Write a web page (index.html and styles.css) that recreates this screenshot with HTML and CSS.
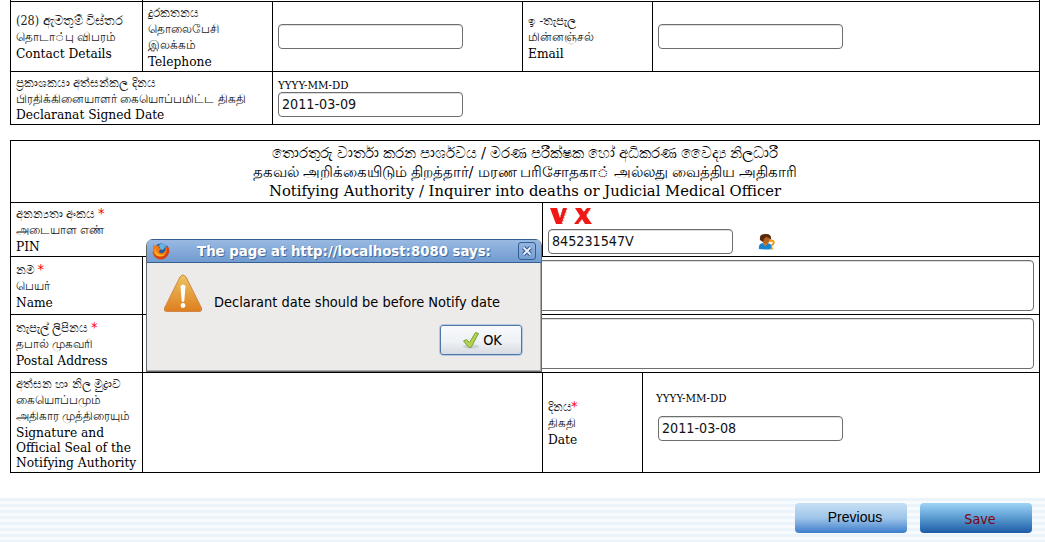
FILE: index.html
```html
<!DOCTYPE html>
<html lang="en">
<head>
<meta charset="utf-8">
<title>Death Declaration</title>
<link rel="stylesheet" href="styles.css">
</head>
<body>
<main class="page">
  <section class="table contact">
    <div class="cell stub"></div><div class="cell stub stub-rest"></div>
    <div class="cell label mid"><p class="si contact-si">(28) ඇමතුම් විස්තර</p><p class="ta">தொடா◌்பு விபரம்</p><p>Contact Details</p></div>
    <div class="cell label mid"><p class="si">දුරකතනය</p><p class="ta">தொலைபேசி</p><p class="ta">இலக்கம்</p><p>Telephone</p></div>
    <div class="cell field"><input class="input" type="text" aria-label="Telephone"></div>
    <div class="cell label mid"><p class="si">ඉ -තැපැල</p><p class="ta">மின்னஞ்சல்</p><p>Email</p></div>
    <div class="cell field"><input class="input" type="text" aria-label="Email"></div>
    <div class="cell label signed span2"><p class="si">ප්‍රකාශකයා අත්සන්කල දිනය</p><p class="ta">பிரதிக்கினையாளர் கையொப்பமிட்ட திகதி</p><p>Declaranat Signed Date</p></div>
    <div class="cell field span3"><span class="hint">YYYY-MM-DD</span><input class="input" type="text" value="2011-03-09" aria-label="Signed date"></div>
  </section>

  <section class="table authority">
    <header class="cell heading"><p class="si">තොරතුරු වාර්තා කරන පාර්ශවය / මරණ පරීක්ෂක හෝ අධිකරණ වෛද්‍ය නිලධාරී</p><p class="ta">தகவல் அறிக்கையிடும் திறத்தார்/ மரண பரிசோதகா◌் அல்லது வைத்திய அதிகாரி</p><p>Notifying Authority / Inquirer into deaths or Judicial Medical Officer</p></header>
    <div class="cell label span2"><p class="si">අනන්‍යතා අංකය <b class="req">*</b></p><p class="ta">அடையாள எண்</p><p>PIN</p></div>
    <div class="cell pin span2">
      <div class="marks">
        <svg width="19" height="17" viewBox="0 0 19 17"><path d="M0 0h7l3 10L13 0h4l-5.500 16H6z" fill="#f31814"/><path d="M10 11l3-10M12 16l5-15" stroke="#7c1712" stroke-width=".7" stroke-dasharray="1 2"/></svg>
        <svg width="18" height="17" viewBox="0 0 18 17"><path d="M1 0h6l3 4 3-4h4l-5 7.500 6 8.500h-7l-3-5-4 5H0l6-8z" fill="#f31814"/><path d="M10 4l3-4M12 8l5-7M4 16l4-5" stroke="#7c1712" stroke-width=".7" stroke-dasharray="1 2"/></svg>
      </div>
      <div class="pin-row"><input class="input" type="text" value="845231547V" aria-label="PIN">
        <svg width="18" height="18" viewBox="0 0 18 18"><path d="M1 16q-1-6 5-6h3q5 0 5 6-7 1-13 0" fill="#1685ce"/><path d="M5 8h5l-1 4-2 1-2-2z" fill="#c8772b"/><ellipse cx="8" cy="6" rx="4" ry="4.500" fill="#b56422"/><path d="M2 7Q1 1 7 1q7-1 6 6l-2-2-3-1-2 2-1 3z" fill="#5b2a0c"/><path d="M12 9q1-2 3-1 2 2-1 4v1" fill="none" stroke="#ef9b17" stroke-width="2"/><circle cx="14" cy="15.500" r="1.300" fill="#f5a51a"/></svg>
      </div>
    </div>
    <div class="cell label person"><p class="si">නම <b class="req">*</b></p><p class="ta">பெயர்</p><p>Name</p></div>
    <div class="cell area span3"><textarea class="input" aria-label="Name"></textarea></div>
    <div class="cell label person"><p class="si">තැපැල් ලිපිනය <b class="req">*</b></p><p class="ta">தபால் முகவரி</p><p>Postal Address</p></div>
    <div class="cell area span3"><textarea class="input" aria-label="Postal address"></textarea></div>
    <div class="cell label seal"><p class="si">අත්සන හා නිල මුද්‍රාව</p><p class="ta">கையொப்பமும்</p><p class="ta">அதிகார முத்திரையும்</p><p>Signature and</p><p>Official Seal of the</p><p>Notifying Authority</p></div>
    <div class="cell"></div>
    <div class="cell label mid"><p class="si">දිනය<b class="req">*</b></p><p class="ta">திகதி</p><p>Date</p></div>
    <div class="cell field notify"><span class="hint">YYYY-MM-DD</span><input class="input" type="text" value="2011-03-08" aria-label="Notify date"></div>
  </section>

  <footer class="footer">
    <button class="btn previous">Previous</button>
    <button class="btn save">Save</button>
  </footer>
</main>

<div class="dialog" role="alertdialog">
  <div class="titlebar">
    <svg width="18" height="18" viewBox="0 0 18 18"><circle cx="9" cy="9" r="7.500" fill="#235a9c"/><path d="M7 3q4-3 7 1l-3 4-3-1z" fill="#64b3e4"/><path d="M1 2l2 2q2-1 4 0-1 2 2 3l-2 2q0 3 4 2 4-2 2-7 4 2 3 6-2 7-8 6-7-1-7-8z" fill="#f27a13"/><path d="M15 3q4 5 1 10-4 6-10 4-5-2-6-8 2 5 7 5 8 0 8-7z" fill="#d9420f"/><path d="M3 6q1 6 6 7 3 0 5-2-3 5-8 3Q2 12 3 6" fill="#fbb82b"/></svg>
    <span class="title">The page at http://localhost:8080 says:</span>
    <span class="close"><svg width="10" height="10" viewBox="0 0 10 10"><path d="M1.500 1.500l7 7M8.500 1.500l-7 7" stroke="#2d568c" stroke-width="4"/><path d="M1.500 1.500l7 7M8.500 1.500l-7 7" stroke="#e8eef8" stroke-width="2"/></svg></span>
  </div>
  <div class="message">
    <svg width="40" height="39" viewBox="0 0 40 39"><defs><linearGradient id="warn" x2="0" y2="1"><stop stop-color="#ecc45f"/><stop offset="1" stop-color="#df7e1f"/></linearGradient></defs><path d="M17 3q3-4 6 0l15.500 31q1 3.500-2 3.500h-33q-3 0-2-3.500z" fill="url(#warn)" stroke="#cf874a"/><path d="M17.500 12q2.500-3 5 0l-1.200 15q-1.300 2-2.600 0z" fill="#fff"/><circle cx="20" cy="31.500" r="2.400" fill="#fff"/></svg>
    <span>Declarant date should be before Notify date</span>
  </div>
  <button class="ok"><svg width="18" height="18" viewBox="0 0 18 18"><ellipse cx="9" cy="15.500" rx="8" ry="2" fill="#cbd0d3"/><path d="M1.500 10l3-1.500 3 3L13.500 1.500l3 1-7.500 14H7z" fill="#b5d24f" stroke="#77a038"/></svg><span>OK</span></button>
</div>
</body>
</html>
```
FILE: styles.css
```css
* { box-sizing: border-box; }
body { margin: 0; background: #fff; color: #000; font-family: "DejaVu Serif Condensed", "DejaVu Serif", "Noto Sans", serif; }
.page { height: 542px; overflow: hidden; display: flex; flex-direction: column; }
p { margin: 0; white-space: nowrap; }

.table { display: grid; gap: 1px; background: #000; width: 1030px; margin-left: 10px; padding: 0 1px 1px; flex: none; }
.contact { grid-template-columns: 131px 129px 249px 129px 386px; grid-template-rows: 1px 69px 52px; }
.authority { grid-template-columns: 131px 399px 99px 396px; grid-template-rows: 61px 53px 57px 57px 99px; margin-top: 15px; padding-top: 1px; }
.cell { background: #fff; min-width: 0; min-height: 0; }
.stub-rest { grid-column: span 4; }
.span2 { grid-column: span 2; }
.span3 { grid-column: span 3; }

.label { padding: 3px 5px 0; font-size: 13.600px; line-height: 16px; display: flex; flex-direction: column; }
.label p { height: 16px; }
.label.mid { justify-content: center; padding-top: 0; }
.label .si, .label .ta { font-size: 12px; color: #222; }
.label .si { font-size: 12.100px; }
.label .contact-si { font-size: 12.500px; }
.signed p:last-child { line-height: 15px; }
.label.person { padding-top: 5px; }
.seal p:nth-child(n+4) { height: 15px; line-height: 16px; }
.req { color: #f00; font: 13.300px/10px "DejaVu Sans", sans-serif; margin-left: -1px; }

.heading { grid-column: 1 / -1; text-align: center; font: 14.770px/19px "DejaVu Serif", "Noto Sans", serif; padding-top: 2px; }
.heading p { height: 19px; }
.heading .si { word-spacing: -.75px; line-height: 20px; }
.heading .ta { word-spacing: -.75px; }

.field { padding-left: 5px; display: flex; flex-direction: column; justify-content: center; align-items: flex-start; }
.hint { font: 10.300px/11px "DejaVu Serif", serif; padding-bottom: 1px; }
.notify { padding: 0 0 12px 15px; }
.notify .hint { margin: 0 0 11px -2px; }
.input { width: 185px; height: 25px; margin: 0; padding: 0 3px; border: 1px solid #6e6e6e; border-radius: 4px; background: #fff; box-shadow: inset 0 1px #ddd; font: 14.200px/20px "DejaVu Sans Condensed", "DejaVu Sans", sans-serif; color: #111; }
.pin { padding: 5px 5px 0; }
.marks { display: flex; gap: 5px; padding-left: 2px; height: 21px; }
.pin-row { display: flex; gap: 25px; align-items: center; height: 25px; }
.pin-row .input { padding-bottom: 1px; }
.area { padding: 3px 5px; display: flex; }
.area .input { flex: 1; height: 51px; resize: none; }

.footer { height: 44px; margin-top: 25px; padding: 5px 13px 0 0; display: flex; gap: 13px; justify-content: flex-end; align-items: flex-start; background: repeating-linear-gradient(#ebf4fa 0 3px, #f8fbfd 3px 6px); }
.btn { width: 112px; height: 30px; padding: 0; border: 0; border-radius: 4px; }
.previous { background: linear-gradient(#c5e0f4, #9fc5e9 50%, #3c7dcb); color: #000; font: 14px "Liberation Sans", sans-serif; padding: 0 0 2px 8px; }
.save { background: linear-gradient(#9dd3f6, #5a9bd0 50%, #1c5ba6); color: #800010; font: 14.200px "DejaVu Sans Condensed", "DejaVu Sans", sans-serif; padding: 1px 0 0 8px; }

.dialog { position: absolute; left: 146px; top: 239px; width: 396px; height: 133px; border: 1px solid #66696c; border-top: 0; border-radius: 7px 7px 0 0; background: #edebe9; font: 14.450px "DejaVu Sans Condensed", "DejaVu Sans", sans-serif; overflow: hidden; box-shadow: inset -1px -1px #aaa; }
.titlebar { height: 24px; display: flex; align-items: center; padding: 0 5px; border: 1px solid #355f91; border-width: 1px 0; background: linear-gradient(#98b9e2, #729bd0); }
.title { flex: 1; text-align: center; color: #fff; font: bold 13.300px "DejaVu Sans", sans-serif; text-shadow: 1px 1px #446b9e; white-space: nowrap; }
.close { width: 18px; height: 18px; border: 1px solid #345f94; border-radius: 3px; display: flex; align-items: center; justify-content: center; }
.message { display: flex; align-items: center; gap: 11px; padding: 11px 0 0 16px; white-space: nowrap; }
.message span { margin-top: 16px; }
.ok { position: absolute; right: 18px; bottom: 15px; width: 84px; height: 32px; border: 1px solid #b5c8e0; box-shadow: inset 0 0 0 1px #4f76a8; border-radius: 4px; background: linear-gradient(#f9fbfe, #eef1f5 55%, #d5dae1); display: flex; align-items: center; justify-content: center; gap: 3px; font: 14.400px "DejaVu Sans Condensed", "DejaVu Sans", sans-serif; color: #000; padding: 0 0 0 2px; }
```
